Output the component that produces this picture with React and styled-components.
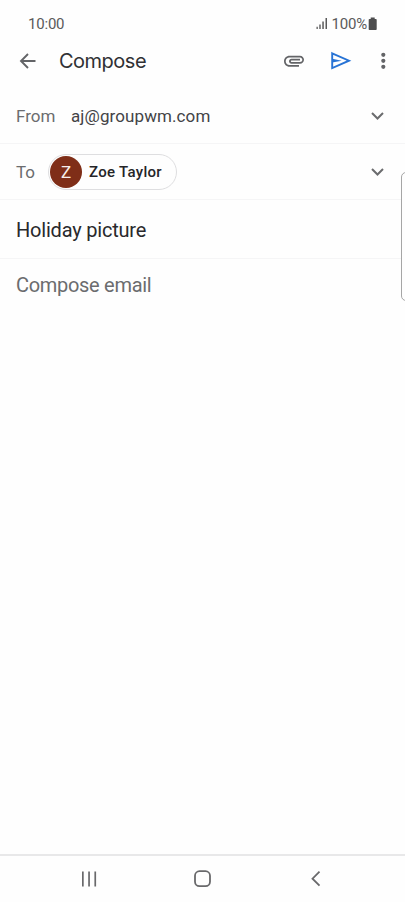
import styled, { createGlobalStyle } from "styled-components";

const GlobalStyle = createGlobalStyle`
  * {
    box-sizing: border-box;
  }
  body {
    margin: 0;
    background: #fefefe;
    font-family: Roboto, "Liberation Sans", sans-serif;
  }
`;

const Screen = styled.div`
  position: relative;
  display: flex;
  flex-direction: column;
  width: 100%;
  height: 902px;
  overflow: hidden;
  background: #fefefe;

  svg {
    display: block;
    flex-shrink: 0;
  }
`;

const StatusBar = styled.div`
  display: flex;
  justify-content: space-between;
  align-items: center;
  height: 36px;
  padding: 11px 27px 0 28px;
  font-size: 15px;
  line-height: 24px;
  letter-spacing: -0.2px;
  color: #5a5a5b;
`;

const StatusIcons = styled.div`
  display: flex;
  align-items: center;
`;

const Percent = styled.span`
  margin: 0 1px 0 4px;
`;

const Toolbar = styled.header`
  display: flex;
  align-items: center;
  height: 51px;
  padding: 0 10px 1px 16px;
`;

const Title = styled.h1`
  flex: 1;
  margin: 0 0 0 19px;
  font-family: Inter, Lato, sans-serif;
  font-size: 20px;
  font-weight: 400;
  line-height: 28px;
  letter-spacing: -0.5px;
  color: #303134;
`;

const Actions = styled.div`
  display: flex;
  align-items: center;
`;

const IconButton = styled.button`
  display: flex;
  padding: 0;
  margin-left: ${({ gap }) => gap || 0}px;
  border: 0;
  background: none;
  color: ${({ color }) => color || "#636467"};
`;

const Row = styled.div`
  display: flex;
  align-items: center;
  height: ${({ height }) => height}px;
  padding: ${({ shift }) => shift || 0}px 15px 0 16px;
  border-bottom: 1px solid #f5f5f6;
`;

const Label = styled.span`
  width: ${({ width }) => width}px;
  font-size: 17px;
  line-height: 24px;
  color: #6b6c6e;
`;

const Address = styled.span`
  flex: 1;
  font-size: 17px;
  line-height: 24px;
  letter-spacing: 0.1px;
  color: #434346;
`;

const Chip = styled.div`
  display: flex;
  align-items: center;
  width: 129px;
  height: 36px;
  margin-right: auto;
  padding-left: 1px;
  border: 1px solid #dedee0;
  border-radius: 18px;
  font-size: 15px;
  font-weight: 500;
  letter-spacing: 0.3px;
  color: #252528;
`;

const Avatar = styled.span`
  display: flex;
  align-items: center;
  justify-content: center;
  width: 32px;
  height: 32px;
  margin-right: 7px;
  border-radius: 50%;
  background: #7f2e18;
  font-size: 17px;
  font-weight: 400;
  letter-spacing: 0;
  color: #f8eeeb;
`;

const Subject = styled.span`
  font-size: 20px;
  line-height: 28px;
  letter-spacing: -0.2px;
  color: #29292c;
`;

const Body = styled.main`
  flex: 1;
  padding: 12px 16px;
  font-size: 20px;
  line-height: 28px;
  letter-spacing: -0.3px;
  color: #6b6c6e;
`;

// edge panel handle, floats over the right side of the screen
const EdgeHandle = styled.div`
  position: absolute;
  top: 172px;
  right: -6px;
  width: 10px;
  height: 129px;
  border: 1px solid #a6a6a6;
  border-radius: 5px;
  background: #fefefe;
`;

const NavBar = styled.nav`
  display: flex;
  justify-content: space-between;
  align-items: center;
  height: 48px;
  padding: 0 77px;
  border-top: 2px solid #e8e8e9;
  color: #69696b;
`;

const ChevronDown = () => (
  <svg width="24" height="24" viewBox="0 0 24 24" fill="none">
    <path d="M6 9l5.500 5.500L17 9" stroke="#6b6c6e" strokeWidth="2" />
  </svg>
);

const SignalIcon = () => (
  <svg width="12" height="13" viewBox="0 0 12 13" fill="#5a5a5b">
    <path d="M.5 9.800h1.300V12H.5zM3.300 7.500h1.400V12H3.300zM6.300 4.500h1.500V12H6.300zM9.500 1H11v11H9.500z" />
  </svg>
);

const BatteryIcon = () => (
  <svg width="10" height="14" viewBox="0 0 10 14" fill="#4d4d4e">
    <path d="M2.700.5h4V2h1.200q.8 0 .8.800v9.400q0 .8-.8.800H1.500q-.8 0-.8-.8V2.800q0-.8.800-.8h1.200z" />
  </svg>
);

const App = () => (
  <>
    <GlobalStyle />
    <Screen>
      <StatusBar>
        <span>10:00</span>
        <StatusIcons>
          <SignalIcon />
          <Percent>100%</Percent>
          <BatteryIcon />
        </StatusIcons>
      </StatusBar>
      <Toolbar>
        <IconButton aria-label="Back">
          <svg width="24" height="24" viewBox="0 0 24 24" fill="none">
            <path
              d="M19.500 12H5.500M12 5l-7 7 7 7"
              stroke="currentColor"
              strokeWidth="1.900"
            />
          </svg>
        </IconButton>
        <Title>Compose</Title>
        <Actions>
          <IconButton aria-label="Attach file">
            <svg width="24" height="24" viewBox="0 0 24 24" fill="currentColor">
              <path d="M2 12.200C2 9.160 4.460 6.700 7.500 6.700H18c2.210 0 4 1.790 4 4s-1.790 4-4 4H9.500C8.120 14.700 7 13.580 7 12.200S8.120 9.700 9.500 9.700H18v1.700H9.410c-.7 0-.7 1.600 0 1.600H18c1.300 0 2.300-1 2.300-2.300s-1-2.300-2.300-2.300H7.500c-2.100 0-3.800 1.700-3.800 3.800s1.700 3.800 3.800 3.800H17v1.700H7.500C4.460 17.700 2 15.240 2 12.200z" />
            </svg>
          </IconButton>
          <IconButton aria-label="Send" color="#2773d5" gap={23}>
            <svg width="24" height="24" viewBox="0 0 24 24">
              <path
                d="M3.200 4.300 20 11.700 3.200 19.100z"
                fill="none"
                stroke="currentColor"
                strokeWidth="1.900"
              />
              <path d="M3.200 9.800 12.700 11.700 3.200 13.600z" fill="currentColor" />
            </svg>
          </IconButton>
          <IconButton aria-label="More options" gap={18}>
            <svg width="24" height="24" viewBox="0 0 24 24" fill="currentColor">
              <circle cx="12.300" cy="5.800" r="2.100" />
              <circle cx="12.300" cy="11.800" r="2.100" />
              <circle cx="12.300" cy="17.800" r="2.100" />
            </svg>
          </IconButton>
        </Actions>
      </Toolbar>
      <Row height={57} shift={2}>
        <Label width={55}>From</Label>
        <Address>aj@groupwm.com</Address>
        <ChevronDown />
      </Row>
      <Row height={56}>
        <Label width={32}>To</Label>
        <Chip>
          <Avatar>Z</Avatar>
          Zoe Taylor
        </Chip>
        <ChevronDown />
      </Row>
      <Row height={59} shift={2}>
        <Subject>Holiday picture</Subject>
      </Row>
      <Body>Compose email</Body>
      <NavBar>
        <svg width="24" height="24" viewBox="0 0 24 24" fill="currentColor">
          <path d="M5 4.500h1.700v15H5zM11.200 4.500h1.700v15h-1.700zM17.400 4.500h1.700v15h-1.700z" />
        </svg>
        <svg width="24" height="24" viewBox="0 0 24 24" fill="none">
          <rect
            x="4"
            y="4.200"
            width="15"
            height="15"
            rx="4.500"
            stroke="currentColor"
            strokeWidth="1.800"
          />
        </svg>
        <svg width="24" height="24" viewBox="0 0 24 24" fill="none">
          <path d="M15.500 4.700 8.500 11.700l7 7" stroke="currentColor" strokeWidth="1.800" />
        </svg>
      </NavBar>
      <EdgeHandle />
    </Screen>
  </>
);

export default App;
